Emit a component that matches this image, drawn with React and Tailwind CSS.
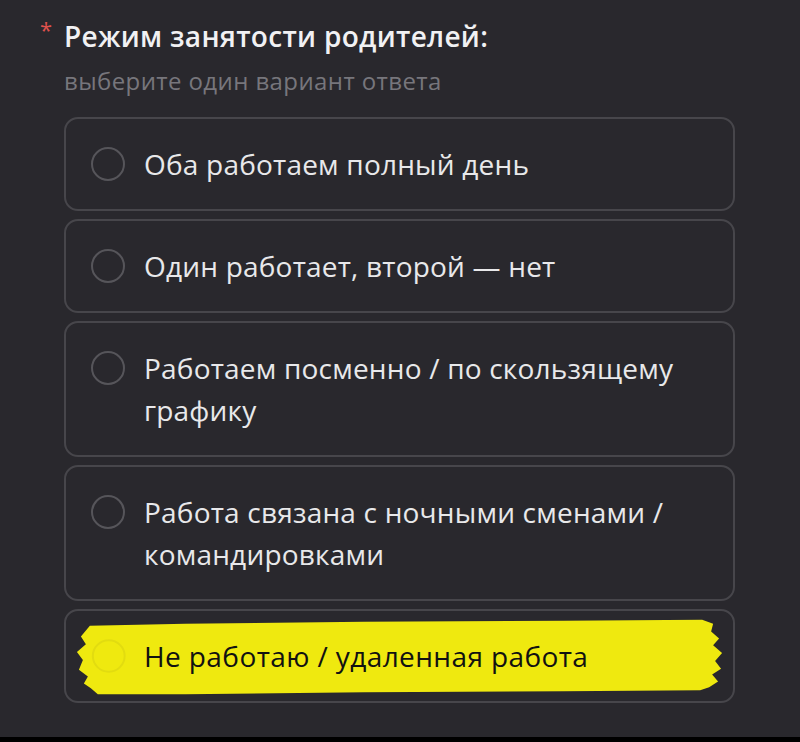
import React from 'react'

const OPTIONS = [
  'Оба работаем полный день',
  'Один работает, второй — нет',
  'Работаем посменно / по скользящему графику',
  'Работа связана с ночными сменами / командировками',
]

const Radio = () => (
  <span className="mt-[4px] h-[34px] w-[34px] shrink-0 rounded-full border-2 border-[#56555a]" />
)

const Option = ({ label }) => (
  <div className="flex items-start gap-[19px] rounded-[14px] border-2 border-[#47464b] py-[24px] pl-[25px] pr-6">
    <Radio />
    <span className="text-[28px] leading-[42px] tracking-[0.2px] text-[#e8e8ea]">{label}</span>
  </div>
)

// highlighter stroke drawn over the last answer
const Highlight = () => (
  <svg className="absolute inset-0 h-full w-full" viewBox="0 0 671 92" preserveAspectRatio="none">
    <path
      d="M24 15 L120 13 L300 11 L500 10 L640 9 L651 13 L649 21 L657 28 L651 35 L660 43 L653 51 L659 59 L650 65 L656 72 L647 78 L638 81 L500 82 L300 83 L120 85 L32 85 L25 79 L18 74 L22 67 L13 60 L17 50 L11 42 L20 34 L15 26 Z"
      fill="#efe90f"
    />
    <circle cx="43" cy="46" r="16" fill="none" stroke="#e2dc10" strokeWidth="2" />
  </svg>
)

export default function App() {
  return (
    <div className="relative h-[742px] w-[800px] overflow-hidden bg-[#29282d] font-['Open_Sans',sans-serif]">
      <div className="flex flex-col px-[64px] pr-[65px] pt-[16px]">
        <div className="relative">
          <span className="absolute -left-[24px] top-[2px] text-[22px] leading-none text-[#e0524d]">*</span>
          <h1 className="text-[28px] font-semibold leading-[40px] tracking-[0.3px] text-[#f1f1f3]">Режим занятости родителей:</h1>
        </div>
        <p className="mt-[9px] text-[24px] leading-[32px] tracking-[0.4px] text-[#77767c]">выберите один вариант ответа</p>

        <div className="mt-[20px] flex flex-col gap-[8px]">
          {OPTIONS.map(o => (
            <Option key={o} label={o} />
          ))}
          <div className="relative rounded-[14px] border-2 border-[#47464b] py-[24px] pl-[25px] pr-6">
            <Highlight />
            <div className="relative flex items-start gap-[19px]">
              <span className="h-[34px] w-[34px] shrink-0" />
              <span className="text-[28px] leading-[42px] tracking-[0.4px] text-[#111]">Не работаю / удаленная работа</span>
            </div>
          </div>
        </div>
      </div>
      <div className="absolute bottom-0 left-0 h-[5px] w-full bg-black" />
    </div>
  )
}
